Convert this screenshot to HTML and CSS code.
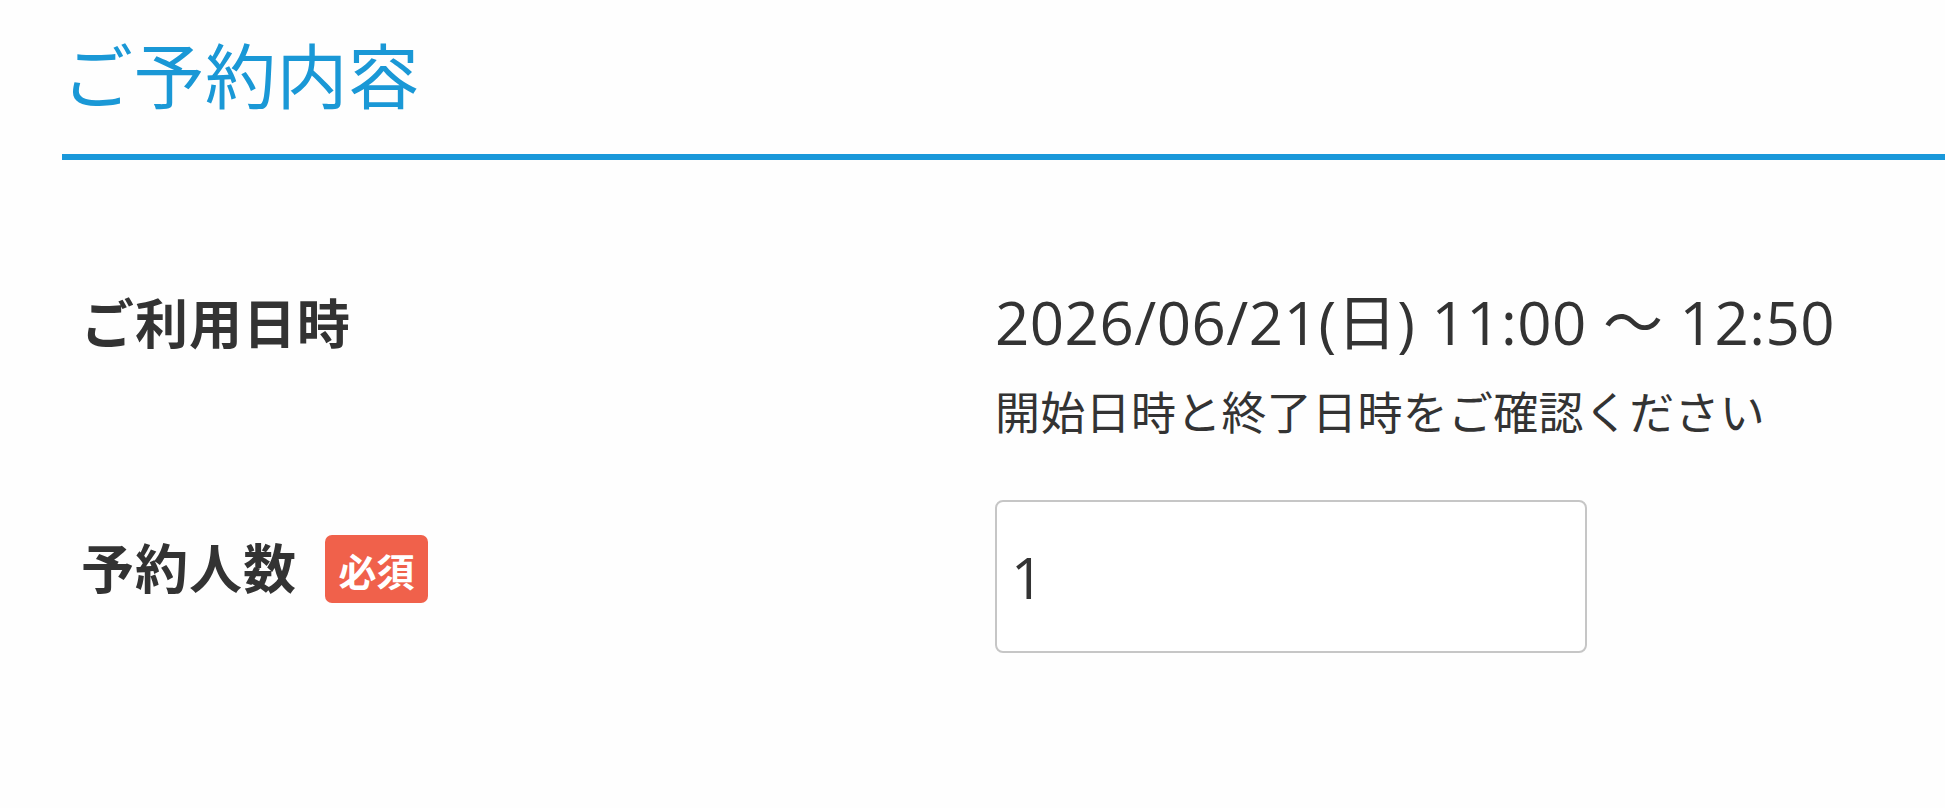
FILE: index.html
```html
<!DOCTYPE html>
<html lang="ja">
<head>
<meta charset="utf-8">
<title>ご予約内容</title>
<link rel="stylesheet" href="styles.css">
</head>
<body>
<section class="reserve">
  <h2 class="reserve-title">ご予約内容</h2>
  <div class="row row-date">
    <div class="row-label"><span class="label-text">ご利用日時</span></div>
    <div class="row-value">
      <div class="date-text">2026/06/21(日) 11:00 ～ 12:50</div>
      <div class="date-note">開始日時と終了日時をご確認ください</div>
    </div>
  </div>
  <div class="row row-people">
    <div class="row-label"><span class="label-text">予約人数</span><span class="badge">必須</span></div>
    <div class="row-value">
      <input class="num-input" type="text" value="1">
    </div>
  </div>
</section>
</body>
</html>
```
FILE: styles.css
```css
html, body {
  margin: 0;
  padding: 0;
  background: #fefefe;
}
body {
  font-family: "Open Sans", "Noto Sans CJK JP", sans-serif;
  color: #333;
}
.reserve {
  padding: 34px 0 0 62px;
}
.reserve-title {
  margin: 0;
  font-size: 71px;
  line-height: 84px;
  font-weight: 400;
  letter-spacing: 0.5px;
  color: #1a98d6;
  padding-bottom: 36px;
  border-bottom: 6px solid #1a98da;
}
.row {
  display: grid;
  grid-template-columns: 933px 1fr;
  align-items: start;
}
.row-date {
  margin-top: 127px;
}
.row-people {
  margin-top: 60px;
}
.row-label {
  display: flex;
  align-items: center;
  padding-left: 19px;
}
.row-date .row-label {
  padding-top: 6px;
}
.row-people .row-label {
  padding-top: 35px;
}
.label-text {
  font-size: 53px;
  line-height: 62px;
  font-weight: 700;
  letter-spacing: 1px;
  color: #333;
}
.badge {
  display: inline-flex;
  align-items: center;
  justify-content: center;
  margin-left: 28px;
  width: 103px;
  height: 68px;
  border-radius: 7px;
  background: #f0614b;
  color: #fff;
  font-size: 38px;
  font-weight: 700;
}
.date-text {
  font-size: 60px;
  line-height: 70px;
  letter-spacing: 0.5px;
  color: #333;
}
.date-note {
  margin-top: 29px;
  font-size: 45px;
  line-height: 54px;
  letter-spacing: 0.3px;
  color: #333;
}
.num-input {
  display: block;
  box-sizing: border-box;
  width: 592px;
  height: 153px;
  margin: 0;
  padding: 0 14px;
  border: 2px solid #c6c6c6;
  border-radius: 8px;
  background: #fff;
  font-family: "Open Sans", "Noto Sans CJK JP", sans-serif;
  font-size: 57px;
  color: #333;
  outline: none;
}
```
